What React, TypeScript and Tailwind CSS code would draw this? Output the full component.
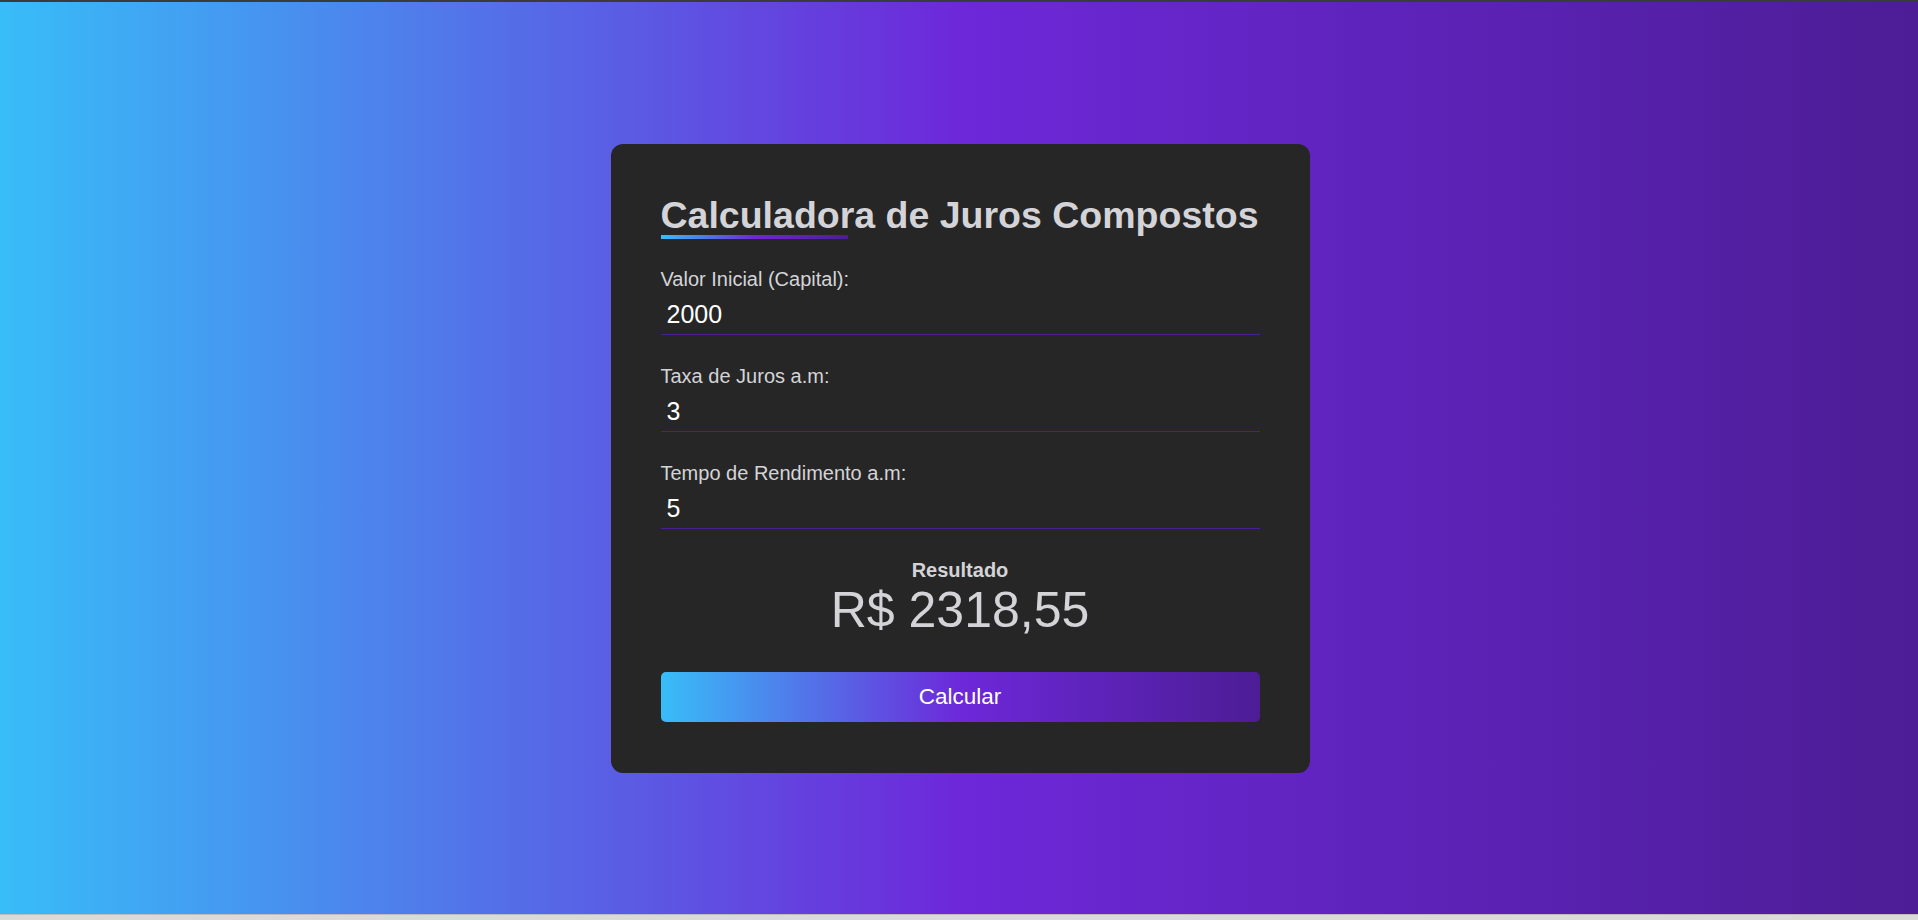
import React from "react";

function Field({ label, value }: { label: string; value: string }) {
  return (
    <div className="flex flex-col">
      <label className="text-[20px] leading-[23px] text-[#d4d4d8]">{label}</label>
      <input
        readOnly
        value={value}
        className="mt-[4px] w-full bg-transparent px-[6px] py-[5px] text-[25px] leading-[29px] text-white outline-none border-b border-[#4c1d95]"
        style={{ fontFamily: '"Liberation Sans", Arial, sans-serif' }}
      />
    </div>
  );
}

export default function App() {
  return (
    <div
      className="flex h-[920px] w-full flex-col overflow-hidden"
      style={{ fontFamily: '"Liberation Sans", Arial, sans-serif' }}
    >
      <div className="h-[2px] bg-[#3b3b3b]" />
      <div className="flex flex-1 items-center justify-center bg-[linear-gradient(to_right,#38bdf8,#6d28d9,#4c1d95)]">
        <div className="ml-[2px] w-[699px] rounded-[12px] bg-[#262626] px-[50px] pt-[50px] pb-[51px]">
          <h1 className="relative text-[37.5px] font-bold leading-[43px] text-[#d4d4d8]">
            Calculadora de Juros Compostos
            <span className="absolute left-0 top-[41px] h-[4px] w-[187px] bg-[linear-gradient(to_right,#38bdf8,#6d28d9,#4c1d95)]" />
          </h1>
          <div className="mt-[31px] flex flex-col gap-[30px]">
            <Field label="Valor Inicial (Capital):" value="2000" />
            <Field label="Taxa de Juros a.m:" value="3" />
            <Field label="Tempo de Rendimento a.m:" value="5" />
          </div>
          <div className="mt-[30px] flex flex-col items-center">
            <span className="text-[20px] font-bold leading-[23px] text-[#d4d4d8]">Resultado</span>
            <span className="text-[50px] leading-[57px] text-[#d4d4d8]">R$ 2318,55</span>
          </div>
          <button className="mt-[33px] flex h-[50px] w-full items-center justify-center rounded-[5px] bg-[linear-gradient(to_right,#38bdf8,#6d28d9,#4c1d95)] text-[22.5px] text-white">
            Calcular
          </button>
        </div>
      </div>
      <div className="h-[6px] border-t border-[#bdbdbd] bg-[#dadada]" />
    </div>
  );
}
